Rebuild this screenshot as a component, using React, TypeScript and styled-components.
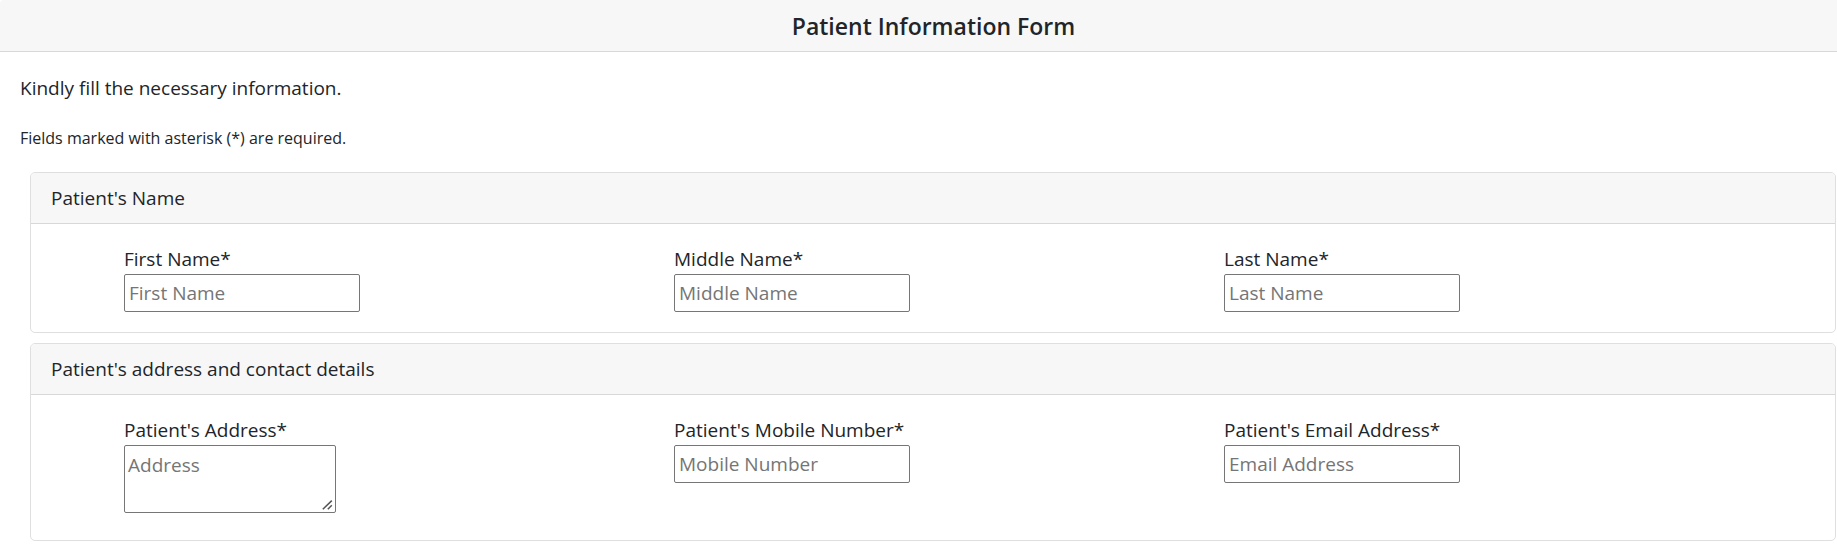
import React from "react";
import styled, { createGlobalStyle } from "styled-components";

const GlobalStyle = createGlobalStyle`
  *, *::before, *::after { box-sizing: border-box; }
  body {
    margin: 0;
    background: #fff;
    color: #212529;
    font-family: "Segoe UI", "Open Sans", "Noto Sans", sans-serif;
    font-size: 19px;
    line-height: 30px;
  }
`;

const PageHeader = styled.header`
  padding: 11px 0 10px 30px;
  background: #f7f7f7;
  border-bottom: 1px solid #d8d8d8;
  border-top-left-radius: 4px;
  text-align: center;
`;

const PageTitle = styled.h1`
  margin: 0;
  font-size: 23px;
  font-weight: 600;
  line-height: 30px;
`;

const Form = styled.form`
  padding: 21px 1px 7px 20px;
`;

const Intro = styled.p`
  margin: 0 0 20px;
`;

const Note = styled.p`
  margin: 0 0 19px;
  font-size: 16px;
`;

const Card = styled.section`
  margin: 0 0 10px 10px;
  border: 1px solid #dfdfdf;
  border-radius: 5px;
  background: #fff;
`;

const CardHeader = styled.h2`
  margin: 0;
  padding: 10px 20px;
  background: #f7f7f7;
  border-bottom: 1px solid #d8d8d8;
  border-radius: 4px 4px 0 0;
  font-size: inherit;
  font-weight: 400;
`;

const CardBody = styled.div<{ $tall?: boolean }>`
  display: grid;
  grid-template-columns: repeat(3, 1fr);
  padding: 20px 61px ${(p) => (p.$tall ? 27 : 20)}px 93px;
`;

const Field = styled.div`
  display: flex;
  flex-direction: column;
  align-items: flex-start;
`;

const Label = styled.label`
  display: block;
`;

const Input = styled.input`
  width: 236px;
  height: 38px;
  padding: 1px 4px;
  border: 1px solid #767676;
  border-radius: 2px;
  background: #fff;
  font: inherit;
  color: inherit;
  &::placeholder { color: #757575; opacity: 1; }
`;

const resizeGrip = encodeURIComponent(
  '<svg xmlns="http://www.w3.org/2000/svg" width="15" height="15" viewBox="0 0 15 15"><path d="M2.8 12.3L11.8 3.6M7.8 12.3L11.8 8.3" stroke="#555" stroke-width="1.5" fill="none"/></svg>'
);

const TextArea = styled.textarea`
  width: 212px;
  height: 68px;
  padding: 4px 3px;
  border: 1px solid #767676;
  border-radius: 2px;
  background: #fff;
  font: inherit;
  color: inherit;
  resize: both;
  overflow: auto;
  &::placeholder { color: #757575; opacity: 1; }
  &::-webkit-resizer {
    background: url("data:image/svg+xml,${resizeGrip}") right bottom no-repeat;
  }
`;

type TextFieldProps = { id: string; label: string; placeholder: string; type?: string };

function TextField({ id, label, placeholder, type = "text" }: TextFieldProps) {
  return (
    <Field>
      <Label htmlFor={id}>{label}*</Label>
      <Input id={id} name={id} type={type} placeholder={placeholder} required />
    </Field>
  );
}

export default function App() {
  return (
    <>
      <GlobalStyle />
      <PageHeader>
        <PageTitle>Patient Information Form</PageTitle>
      </PageHeader>
      <Form>
        <Intro>Kindly fill the necessary information.</Intro>
        <Note>Fields marked with asterisk (*) are required.</Note>
        <Card>
          <CardHeader>Patient's Name</CardHeader>
          <CardBody>
            <TextField id="firstName" label="First Name" placeholder="First Name" />
            <TextField id="middleName" label="Middle Name" placeholder="Middle Name" />
            <TextField id="lastName" label="Last Name" placeholder="Last Name" />
          </CardBody>
        </Card>
        <Card>
          <CardHeader>Patient's address and contact details</CardHeader>
          <CardBody $tall>
            <Field>
              <Label htmlFor="address">Patient's Address*</Label>
              <TextArea id="address" name="address" placeholder="Address" required />
            </Field>
            <TextField id="mobile" type="tel" label="Patient's Mobile Number" placeholder="Mobile Number" />
            <TextField id="email" type="email" label="Patient's Email Address" placeholder="Email Address" />
          </CardBody>
        </Card>
      </Form>
    </>
  );
}
